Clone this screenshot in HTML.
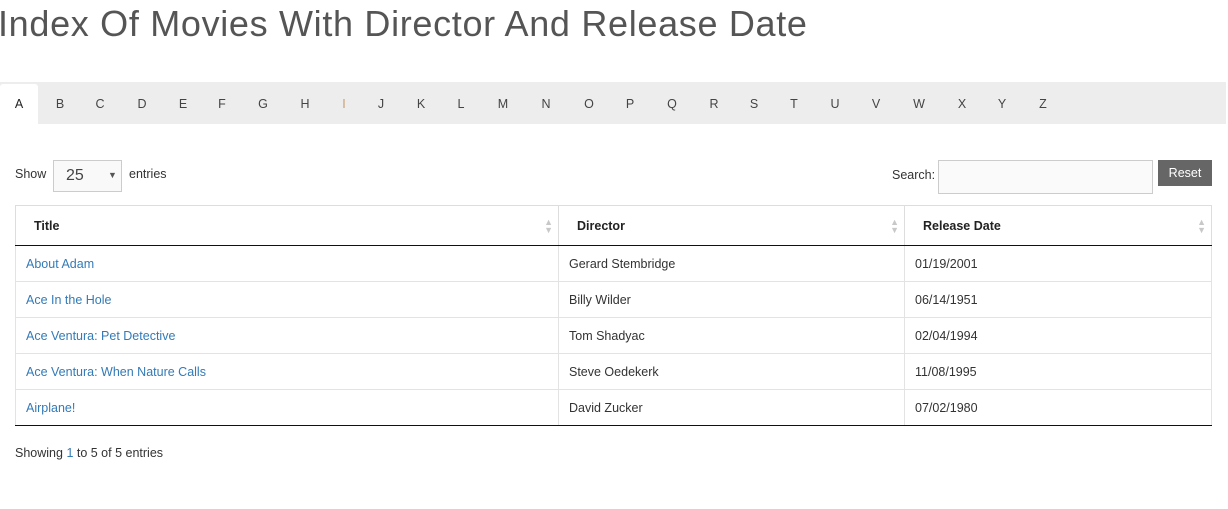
<!DOCTYPE html>
<html><head><meta charset="utf-8"><style>
body{margin:0;width:1228px;height:509px;background:#fff;font-family:"Liberation Sans",sans-serif;color:#333;position:relative;overflow:hidden;font-size:12.5px}
.a{position:absolute;white-space:nowrap}
h1{position:absolute;left:-2px;top:3px;margin:0;font-weight:300;font-size:36px;color:#555;letter-spacing:0.68px;white-space:nowrap}
.bar{position:absolute;left:0;top:82px;width:1226px;height:42px;background:#ededed}
.tabA{position:absolute;left:0;top:84px;width:38px;height:40px;background:#fff;border-radius:3px 3px 0 0}
.l{position:absolute;top:97px;font-size:12.5px;color:#444;transform:translateX(-50%)}
.sel{position:absolute;left:53px;top:160px;width:69px;height:32px;border:1px solid #ccc;background:#f9f9f9;box-sizing:border-box}
.inp{position:absolute;left:938px;top:160px;width:215px;height:34px;border:1px solid #ccc;background:#fafafa;box-sizing:border-box}
.btn{position:absolute;left:1158px;top:160px;width:54px;height:26px;background:#666;color:#fff;text-align:center;line-height:26px;font-size:12.5px}
table{position:absolute;left:15px;top:205px;width:1197px;border-collapse:collapse;font-size:12.5px}
th{height:39px;text-align:left;padding:0 0 0 18px;border:1px solid #ddd;border-bottom:1px solid #111;font-weight:bold;color:#222;position:relative}
td{height:35px;padding:0 0 0 10px;border:1px solid #e3e3e3;color:#333}
tr:last-child td{border-bottom:1px solid #111}
td a{color:#337ab7;text-decoration:none}
.s{position:absolute;right:5px;top:12px;font-size:9px;color:#c8c8c8;line-height:8px}
</style></head><body>
<h1>Index Of Movies With Director And Release Date</h1>
<div class="bar"></div><div class="tabA"></div>
<span class="l" style="left:19px;color:#222">A</span><span class="l" style="left:60px">B</span><span class="l" style="left:100px">C</span><span class="l" style="left:142px">D</span><span class="l" style="left:183px">E</span><span class="l" style="left:222px">F</span><span class="l" style="left:263px">G</span><span class="l" style="left:305px">H</span><span class="l" style="left:344px;color:#c8a070">I</span><span class="l" style="left:381px">J</span><span class="l" style="left:421px">K</span><span class="l" style="left:461px">L</span><span class="l" style="left:503px">M</span><span class="l" style="left:546px">N</span><span class="l" style="left:589px">O</span><span class="l" style="left:630px">P</span><span class="l" style="left:672px">Q</span><span class="l" style="left:714px">R</span><span class="l" style="left:754px">S</span><span class="l" style="left:794px">T</span><span class="l" style="left:835px">U</span><span class="l" style="left:876px">V</span><span class="l" style="left:919px">W</span><span class="l" style="left:962px">X</span><span class="l" style="left:1002px">Y</span><span class="l" style="left:1043px">Z</span>
<span class="a" style="left:15px;top:167px">Show</span>
<div class="sel"><span class="a" style="left:12px;top:6px;font-size:16px;color:#444">25</span><span class="a" style="left:54px;top:9px;font-size:9px;color:#555">▼</span></div>
<span class="a" style="left:129px;top:167px">entries</span>
<span class="a" style="left:892px;top:168px">Search:</span>
<div class="inp"></div><div class="btn">Reset</div>
<table>
<tr><th style="width:524px">Title<span class="s">▲<br>▼</span></th><th style="width:327px">Director<span class="s">▲<br>▼</span></th><th>Release Date<span class="s">▲<br>▼</span></th></tr>
<tr><td><a>About Adam</a></td><td>Gerard Stembridge</td><td>01/19/2001</td></tr>
<tr><td><a>Ace In the Hole</a></td><td>Billy Wilder</td><td>06/14/1951</td></tr>
<tr><td><a>Ace Ventura: Pet Detective</a></td><td>Tom Shadyac</td><td>02/04/1994</td></tr>
<tr><td><a>Ace Ventura: When Nature Calls</a></td><td>Steve Oedekerk</td><td>11/08/1995</td></tr>
<tr><td><a>Airplane!</a></td><td>David Zucker</td><td>07/02/1980</td></tr>
</table>
<span class="a" style="left:15px;top:446px">Showing <span style="color:#337ab7">1</span> to 5 of 5 entries</span>
</body></html>
